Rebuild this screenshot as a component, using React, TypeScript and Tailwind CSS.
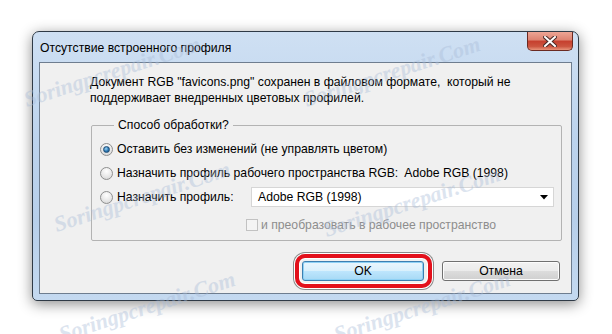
const font = { fontFamily: '"Liberation Sans", "Noto Sans", sans-serif' };

const Radio = ({ checked }: { checked?: boolean }) => (
  <span className="w-[13px] h-[13px] rounded-full border border-[#8e8f8f] bg-[radial-gradient(circle_at_50%_30%,#ffffff_0%,#e6e6e6_60%,#d0d0d0_100%)] flex items-center justify-center shrink-0">
    {checked && (
      <span className="w-[7px] h-[7px] rounded-full bg-[radial-gradient(circle_at_40%_35%,#9fd6f7_0%,#2a77b2_55%,#184f7e_100%)] border border-[#1f4d75]" />
    )}
  </span>
);

const Watermark = ({ className }: { className: string }) => (
  <span
    className={`absolute text-[22px] italic font-bold text-[#a9bcd8] opacity-40 rotate-[-18deg] whitespace-nowrap pointer-events-none ${className}`}
    style={{ fontFamily: '"Liberation Serif", serif' }}
  >
    Soringpcrepair.Com
  </span>
);

export default function App() {
  return (
    <div className="relative w-[612px] h-[334px] bg-white overflow-hidden text-[12.2px] text-black" style={font}>
      <div className="ml-[32px] mt-[31px] w-[547px] h-[270px] rounded-t-[7px] rounded-b-[5px] border border-[#2f3a46] bg-[linear-gradient(to_bottom,#cfe0f3_0%,#bcd3ed_40%,#b7cfea_70%,#c4d9f0_100%)] shadow-[0_3px_14px_rgba(0,0,0,0.45)] flex flex-col">
        <div className="h-[30px] flex items-start justify-between shrink-0">
          <span className="pl-[7px] pt-[8px] leading-[16px]">Отсутствие встроенного профиля</span>
          <button className="mr-[5px] w-[46px] h-[19px] rounded-b-[5px] border border-t-0 border-[#6b2a22] bg-[linear-gradient(to_bottom,#eda595_0%,#dd8270_45%,#c63f2e_50%,#cc5540_80%,#e8957c_100%)] flex items-center justify-center">
            <svg width="14" height="11" viewBox="0 0 14 11">
              <path d="M2 1 L12 10 M12 1 L2 10" stroke="#4a2a26" strokeWidth="4" strokeLinecap="square" />
              <path d="M2 1 L12 10 M12 1 L2 10" stroke="#ffffff" strokeWidth="2" strokeLinecap="square" />
            </svg>
          </button>
        </div>
        <div className="mx-[6px] mb-[6px] flex-1 border border-[#6e7d8f] bg-[#f0f0f0] flex flex-col">
          <p className="pl-[50px] pt-[11px] leading-[16px]">
            Документ RGB "favicons.png" сохранен в файловом формате,&nbsp; который не
            <br />
            поддерживает внедренных цветовых профилей.
          </p>
          <fieldset className="ml-[51px] mt-[11px] w-[471px] border border-[#b3b3b3] rounded-[2px] pl-[8px] pb-[3px]">
            <legend className="ml-[14px] px-[4px] leading-[16px]">Способ обработки?</legend>
            <div className="pt-[4px] flex flex-col">
              <div className="h-[24px] flex items-center gap-[4px]">
                <Radio checked />
                <span>Оставить без изменений (не управлять цветом)</span>
              </div>
              <div className="h-[24px] flex items-center gap-[4px]">
                <Radio />
                <span>Назначить профиль рабочего пространства RGB:&nbsp; Adobe RGB (1998)</span>
              </div>
              <div className="h-[24px] flex items-center gap-[4px]">
                <Radio />
                <span className="w-[130px]">Назначить профиль:</span>
                <div className="w-[303px] h-[20px] border border-[#d6d6d6] bg-white flex items-center justify-between pl-[6px] pr-[5px]">
                  <span>Adobe RGB (1998)</span>
                  <svg width="8" height="5" viewBox="0 0 8 5">
                    <path d="M0 0 H8 L4 4.5 Z" fill="#000" />
                  </svg>
                </div>
              </div>
              <div className="mt-[4px] h-[24px] flex items-center gap-[3px] pl-[146px]">
                <span className="w-[12px] h-[12px] border border-[#c2c2c2] bg-[#f4f4f4]" />
                <span className="text-[#8d8d8d]">и преобразовать в рабочее пространство</span>
              </div>
            </div>
          </fieldset>
          <div className="mt-[20px] flex justify-end gap-[18px] pr-[11px]">
            <div className="relative">
              <span className="absolute -left-[7px] -right-[8px] -top-[7px] -bottom-[7px] rounded-[10px] border-[4px] border-[#e3101b] shadow-[0_0_0_1px_#ffffff,0_0_0_2px_#8a8a8a,inset_0_0_0_1px_#ffffff]" />
              <button className="w-[122px] h-[20px] rounded-[3px] border border-[#3c7fb1] bg-[linear-gradient(to_bottom,#eaf6fd_0%,#d9f0fc_50%,#bee6fd_50%,#a7d9f5_100%)] shadow-[inset_0_0_0_1px_#8ed1f5] leading-[18px]">
                OK
              </button>
            </div>
            <button className="w-[118px] h-[20px] rounded-[3px] border border-[#707070] bg-[linear-gradient(to_bottom,#f2f2f2_0%,#ebebeb_50%,#dddddd_50%,#cfcfcf_100%)] shadow-[inset_0_0_0_1px_#fcfcfc] leading-[18px]">
              Отмена
            </button>
          </div>
        </div>
      </div>
      <Watermark className="left-[20px] top-[55px]" />
      <Watermark className="left-[300px] top-[55px]" />
      <Watermark className="left-[50px] top-[180px]" />
      <Watermark className="left-[320px] top-[185px]" />
      <Watermark className="left-[55px] top-[290px]" />
      <Watermark className="left-[330px] top-[290px]" />
    </div>
  );
}
